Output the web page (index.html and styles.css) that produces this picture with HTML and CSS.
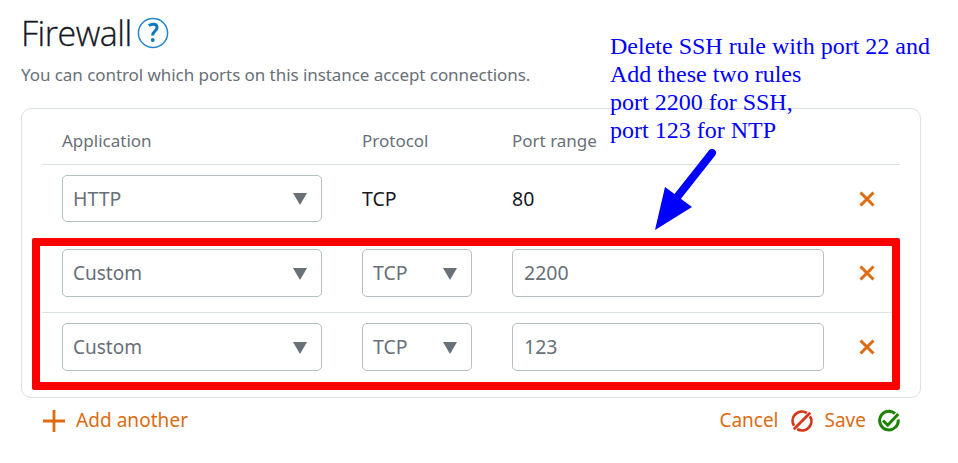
FILE: index.html
```html
<!DOCTYPE html>
<html lang="en"><head><meta charset="utf-8"><title>Firewall</title><link rel="stylesheet" href="styles.css"></head>
<body>
<main class="page">
<header class="head"><h1>Firewall</h1>
<svg class="help" width="32" height="32" viewBox="0 0 32 32"><circle cx="16" cy="16" r="14.6"/><path d="M11.8 8.5C15 6.5 20 6.7 20 10.5C20 14.5 15.7 14 15.7 18.5"/><circle class="dot" cx="15.8" cy="23" r="1.9"/></svg></header>
<p class="intro">You can control which ports on this instance accept connections.</p>
<section class="card">
<div class="row titles"><span>Application</span><span>Protocol</span><span>Port range</span></div>
<div class="row rule first"><div class="select">HTTP<i></i></div><span class="plain">TCP</span><span class="plain">80</span><svg class="x" viewBox="0 0 16 16"><path d="M1.5 1.5l13 13M14.5 1.5l-13 13"/></svg></div>
<div class="row rule second"><div class="select custom">Custom<i></i></div><div class="select">TCP<i></i></div><div class="input">2200</div><svg class="x" viewBox="0 0 16 16"><path d="M1.5 1.5l13 13M14.5 1.5l-13 13"/></svg></div>
<div class="row rule third"><div class="select custom">Custom<i></i></div><div class="select">TCP<i></i></div><div class="input">123</div><svg class="x" viewBox="0 0 16 16"><path d="M1.5 1.5l13 13M14.5 1.5l-13 13"/></svg></div>
</section>
<footer class="foot">
<svg width="22" height="22" viewBox="0 0 22 22"><path d="M11 0v22M0 11h22" stroke="#dd6b10" stroke-width="2.8"/></svg><span class="add">Add another</span>
<span class="cancel">Cancel</span><svg width="24" height="24" viewBox="0 0 24 24" fill="none" stroke="#d5371b" stroke-width="2.8"><path d="M16.8 4A9.3 9.3 0 0 0 4 16.8M20 7.2A9.3 9.3 0 0 1 7.2 20M3.8 20.2L20.2 3.8"/></svg>
<span class="save">Save</span><svg width="24" height="24" viewBox="0 0 24 24" fill="none" stroke="#1d8102" stroke-width="3"><path d="M18 4.5A9.3 9.3 0 1 0 21.2 10.5M6 11.5l4.7 4.7L21.3 5"/></svg>
</footer>
</main>
<div class="frame"></div>
<div class="note">Delete SSH rule with port 22 and<br>Add these two rules<br>port 2200 for SSH,<br>port 123 for NTP</div>
<svg class="arrow" width="80" height="90" viewBox="645 145 80 90"><path d="M712 153L678 196" stroke="#00f" stroke-width="8" stroke-linecap="round"/><path d="M655 230L665 187L692 207Z" fill="#00f"/></svg>
</body></html>
```
FILE: styles.css
```css
*{box-sizing:border-box}
body{margin:0;width:958px;height:463px;overflow:hidden;background:#fff;font-family:"Noto Sans",sans-serif;color:#16191f}
.page{padding:12px 37px 0 21px}
.head{display:flex;height:42px}
h1{margin:0;width:116px;height:42px;font:300 34px/43px "Open Sans","Noto Sans",sans-serif;letter-spacing:-.5px;white-space:nowrap;-webkit-text-stroke:.3px #16191f}
.help{margin-top:5px}
.help circle{fill:none;stroke:#2286ca;stroke-width:1.5}
.help path{fill:none;stroke:#0a78c2;stroke-width:3}
.help .dot{fill:#0a78c2;stroke:none}
.intro{margin:9px 0 0;height:24px;line-height:24px;font-size:17px;letter-spacing:-.06px;color:#687078;white-space:nowrap}
.card{margin-top:21px;width:900px;height:290px;border:1px solid #d9e1e1;border-radius:10px;padding:0 20px}
.row{display:grid;grid-template-columns:260px 110px 312px 1fr;column-gap:40px;align-items:center;padding-left:20px}
.titles{height:56px;padding-top:8px;font-size:17px;color:#687078;border-bottom:1px solid #d9e1e1}
.rule{font-size:19.5px}
.first{height:69px;padding-bottom:2px}
.second{height:79px;border-bottom:1px solid #d9e1e1}
.third{height:70px;padding-bottom:2px}
.plain{line-height:45px;padding-bottom:1px}
.select,.input{height:48px;border:1px solid #b3bfc0;border-radius:5px;padding:0 11px;line-height:45px;color:#687078}
.select{display:flex;justify-content:space-between;padding-left:10px;padding-right:14px}
.first .select{height:47px;line-height:45px}
.custom{font-size:19px;line-height:46px}
.select i{align-self:center;margin-top:1px;border:7.5px solid transparent;border-top:12px solid #687078;border-bottom:0}
.x{width:16px;height:16px;margin-left:-5px;fill:none;stroke:#dd6b10;stroke-width:3}
.foot{display:flex;align-items:center;height:46px;padding-left:22px;font-size:19px;line-height:42px;color:#dd6b10;width:880px}
.foot span{padding-bottom:3px}
.add{margin-left:11px;letter-spacing:.05px}
.cancel{margin-left:auto;margin-right:11px}
.save{margin:0 11px}
.frame{position:absolute;left:32px;top:238px;width:868px;height:152px;border:8px solid #f00;border-radius:2px}
.note{position:absolute;left:610px;top:32px;font:24px/28px "Liberation Serif",serif;color:#00f;white-space:nowrap}
.arrow{position:absolute;left:645px;top:145px}
```
